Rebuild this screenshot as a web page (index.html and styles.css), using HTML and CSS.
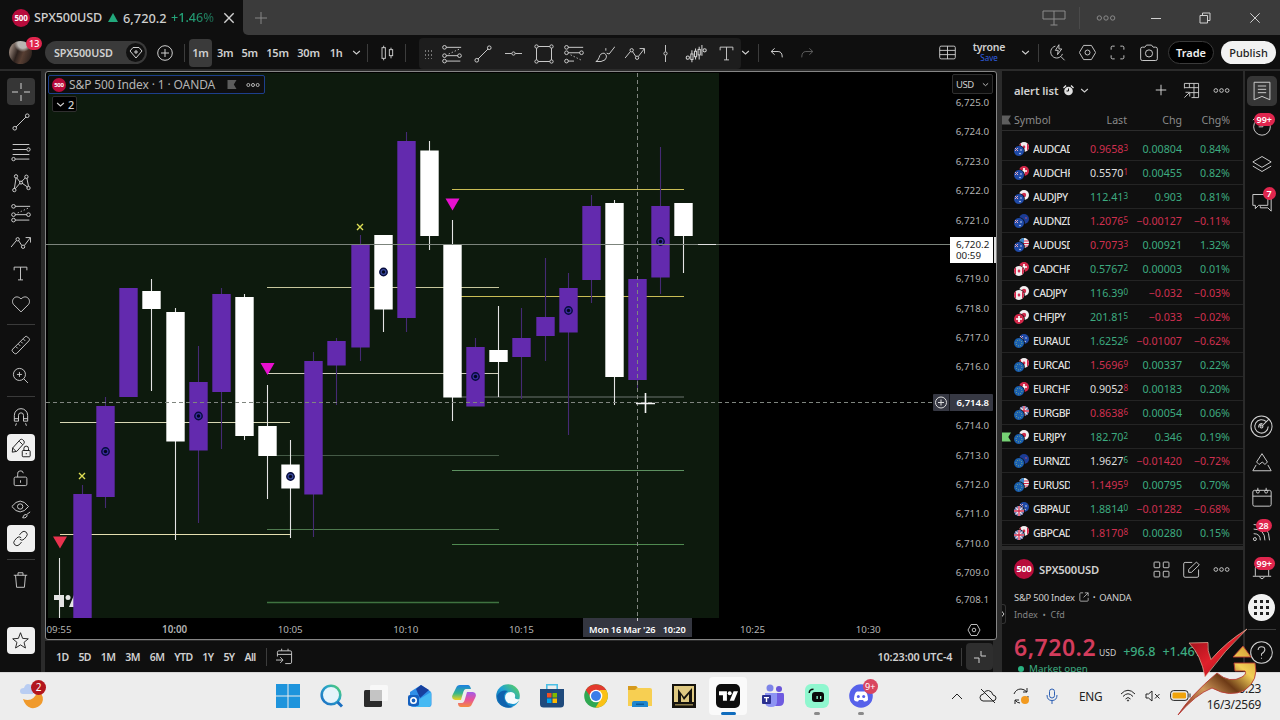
FILE: index.html
```html
<!DOCTYPE html>
<html lang="en">
<head>
  <meta charset="UTF-8" />
  <meta name="viewport" content="width=device-width, initial-scale=1.0" />
  <title>SPX500USD 6,720.2 +1.46%</title>
  <link rel="stylesheet" href="styles.css">
</head>
<body>
  <svg class="sprite">
    <symbol id="i-plus" viewBox="0 0 24 24"><path d="M12 3v18M3 12h18"/></symbol>
    <symbol id="i-close" viewBox="0 0 24 24"><path d="M4 4l16 16M20 4L4 20"/></symbol>
    <symbol id="i-chev" viewBox="0 0 24 24"><path d="M3 8l9 8 9-8"/></symbol>
    <symbol id="i-dots" viewBox="0 0 24 24"><circle cx="4" cy="12" r="2.6"/><circle cx="12" cy="12" r="2.6"/><circle cx="20" cy="12" r="2.6"/></symbol>
    <symbol id="i-trend" viewBox="0 0 24 24"><circle cx="4.500" cy="19.500" r="2.200"/><circle cx="19.500" cy="4.500" r="2.200"/><path d="M6 18L18 6"/></symbol>
    <symbol id="i-fibline" viewBox="0 0 24 24"><path d="M2 3h20M2 9h17M2 15h20M5 20.500h17"/><circle cx="21" cy="9" r="2"/><circle cx="3" cy="20.500" r="2"/></symbol>
    <symbol id="i-pattern" viewBox="0 0 24 24"><path d="M4 19L6 6M7 6l4 5M12 11l5-5M19 6l2 10M5 19l6-7M13 12l7 5"/><circle cx="4" cy="20.500" r="2"/><circle cx="6" cy="4" r="2"/><circle cx="12" cy="11.500" r="1.800"/><circle cx="18.500" cy="4.500" r="2"/><circle cx="21" cy="18" r="2"/></symbol>
    <symbol id="i-proj" viewBox="0 0 24 24"><path d="M5 4h18M5 14h14M5 20.500h17"/><circle cx="3" cy="4" r="2.200"/><circle cx="3" cy="14" r="2.200"/><circle cx="3" cy="20.500" r="2.200"/><circle cx="21" cy="14" r="2.200"/><path stroke-dasharray="1.500 2.500" d="M8 12L21 6"/></symbol>
    <symbol id="i-proj2" viewBox="0 0 24 24"><path d="M5 4h18M5 10.500h14M5 20.500h7"/><circle cx="3" cy="4" r="2.200"/><circle cx="3" cy="10.500" r="2.200"/><circle cx="3" cy="20.500" r="2.200"/><circle cx="21" cy="10.500" r="2.200"/><path stroke-dasharray="1.500 2.500" d="M8 13L22 20"/></symbol>
    <symbol id="i-wave" viewBox="0 0 24 24"><path d="M0 17l6.500-8M9 9l4 6M16 15l7-9M17.500 5.500H23.500v6"/><circle cx="8" cy="7.500" r="2"/><circle cx="14.500" cy="16.500" r="2"/></symbol>
    <symbol id="i-text" viewBox="0 0 24 24"><path d="M3 7.500V3h18v4.500M12 3v18M8.500 21h7"/></symbol>
    <symbol id="i-heart" viewBox="0 0 24 24"><path d="M12 21.500L3 12.500C-1 7 6-.5 12 6c6-6.500 13 1 9 6.500z"/></symbol>
    <symbol id="i-ruler" viewBox="0 0 24 24"><path d="M2 17L17 2q1.500-1 3 .5l1.500 1.500q1.500 1.500 0 3L7 22q-1.500 1-3 0l-2-2q-1.500-1.500 0-3zM6 14l2 2M9 11l2 2M12 8l2 2M15 5l2 2"/></symbol>
    <symbol id="i-zoom" viewBox="0 0 24 24"><circle cx="10.500" cy="10.500" r="8.500"/><path d="M16.500 16.500L22.500 22.500M10.500 7v7M7 10.500h7"/></symbol>
    <symbol id="i-magnet" viewBox="0 0 24 24"><path d="M4 17v-7a8 8 0 0 1 16 0v7h-5v-7a3 3 0 0 0-6 0v7zM4 14h5M15 14h5M6.500 19.500l-1 3M17.500 19.500l1 3"/></symbol>
    <symbol id="i-penlock" viewBox="0 0 24 24"><path d="M2 12L11 2q1.500-1 3 0l1.500 1.500q1 1.500 0 3L7 16l-5.500 1zM10 4l4 4M2 12l4 4"/><rect x="13.500" y="15" width="9.500" height="7.500" rx="1"/><path d="M15.500 15v-2.500a2.700 2.700 0 0 1 5.500 0V15M18.300 18v1.500"/></symbol>
    <symbol id="i-unlock" viewBox="0 0 24 24"><rect x="3" y="10" width="18" height="12" rx="2"/><path d="M8 10V6a4 4 0 0 1 8-1.500M12 14.500v3.500"/></symbol>
    <symbol id="i-eye" viewBox="0 0 24 24"><path d="M1 9q10-13 20 0q-10 13-20 0z"/><circle cx="11" cy="9" r="3.200"/><path d="M14 22.500q1-4 4-4q3 1 0 3.500-2 1-4 .5zM19 18.500l4-3"/></symbol>
    <symbol id="i-link" viewBox="0 0 24 24"><path d="M10.500 7l3.500-4q3-2.500 6 0 3 3 .5 6L17 13q-3 3-6 0M13.500 17L10 21q-3 2.500-6 0-3-3-.5-6L7 11q3-3 6 0"/></symbol>
    <symbol id="i-trash" viewBox="0 0 24 24"><path d="M2.500 6h19M8.500 6V2.500h7V6M5 6l1.500 17h11L19 6"/></symbol>
    <symbol id="i-star" viewBox="0 0 24 24"><path d="M12 1l3 8 8 .6-6 5 2 8L12 18.200 5 22.600l2-8-6-5L9 9z"/></symbol>
    <symbol id="i-hline" viewBox="0 0 24 24"><path d="M0 12h9.500M14.500 12H24"/><circle cx="12" cy="12" r="2.300"/></symbol>
    <symbol id="i-vline" viewBox="0 0 24 24"><path d="M12 0v9.500M12 14.500V24"/><circle cx="12" cy="12" r="2.300"/></symbol>
    <symbol id="i-rect" viewBox="0 0 24 24"><path d="M5 3h14M5 21h14M3 5v14M21 5v14"/><circle cx="3" cy="3" r="2"/><circle cx="21" cy="3" r="2"/><circle cx="3" cy="21" r="2"/><circle cx="21" cy="21" r="2"/></symbol>
    <symbol id="i-brush" viewBox="0 0 24 24"><path d="M1 21q3-1 4-5 1-5 6-5 5 3 1 8-4 3-11 2zM13 8V5M14 11l3 1 7-9"/></symbol>
    <symbol id="i-bars" viewBox="0 0 24 22"><circle cx="3" cy="15" r="1.800"/><circle cx="21.500" cy="7" r="1.800"/><path d="M7.500 7v4M7.500 17v3M11.500 5v3M11.500 14v3M15.500 3v3M15.500 12v5M18.500 1v12"/><rect x="6.300" y="11" width="2.400" height="6"/><rect x="10.300" y="8" width="2.400" height="6"/><rect x="14.300" y="6" width="2.400" height="6"/></symbol>
    <symbol id="i-candles" viewBox="0 0 24 24"><path d="M7 1v3M7 20v3M18 4v3M18 16v4"/><rect x="4.500" y="4" width="5" height="16"/><rect x="15.500" y="7" width="5" height="9"/></symbol>
    <symbol id="i-undo" viewBox="0 0 24 24"><path d="M8 4L2 9.500 8 15M2 9.500h12q7 0 7 10"/></symbol>
    <symbol id="i-redo" viewBox="0 0 24 24"><path d="M16 4l6 5.500L16 15M22 9.500H10q-7 0-7 10"/></symbol>
    <symbol id="i-layout" viewBox="0 0 24 24"><rect x="1" y="3" width="22" height="18" rx="2"/><path d="M1 9h22M1 15h22M12 3v18"/></symbol>
    <symbol id="i-quick" viewBox="0 0 24 24"><path d="M9 3a8.500 8.500 0 1 0 10 11M16.500 17.500L22 23M14 1l-5 8h4l-1 6 6-8h-4z"/></symbol>
    <symbol id="i-hex" viewBox="0 0 24 24"><path d="M6.500 2h11L23.500 12l-6 10h-11L.5 12z"/><circle cx="12" cy="12" r="3.500"/></symbol>
    <symbol id="i-full" viewBox="0 0 24 24"><path d="M3 8V5q0-2 2-2h3M16 3h3q2 0 2 2v3M21 16v3q0 2-2 2h-3M8 21H5q-2 0-2-2v-3"/></symbol>
    <symbol id="i-camera" viewBox="0 0 24 24"><path d="M4 5h3l2-2.500h6L17 5h3q2 0 2 2v12q0 2-2 2H4q-2 0-2-2V7q0-2 2-2z"/><circle cx="12" cy="12.500" r="4.300"/></symbol>
    <symbol id="i-tableadd" viewBox="0 0 24 24"><path d="M2 9V2h20v20H12M2 8h20M9 2v6M15.500 2v20M10 15h12M2 22l7-7M3.500 14.500H9.500v6"/></symbol>
    <symbol id="i-list" viewBox="0 0 24 24"><path d="M2.500 1.500h19v21L12 18.500 2.500 22.500zM7 6h10M7 10h10M7 14h10"/></symbol>
    <symbol id="i-clock" viewBox="0 0 24 24"><circle cx="12" cy="13" r="10"/><path d="M13 7v6H8M1 5l4-4"/></symbol>
    <symbol id="i-layers" viewBox="0 0 24 24"><path d="M12 3l11 6.500L12 16 1 9.500zM1 14.500L12 21l11-6.500"/></symbol>
    <symbol id="i-chat" viewBox="0 0 24 24"><path d="M1 3h18v13H8l-4 4v-4H1zM21 8h2v15l-4-4h-9v-2"/></symbol>
    <symbol id="i-radar" viewBox="0 0 24 24"><circle cx="12" cy="12" r="11"/><path d="M17 7a7 7 0 1 0 2 5M12 12l8-8M9 13q0-4 4-4"/><circle cx="12" cy="12" r="1.500"/></symbol>
    <symbol id="i-mount" viewBox="0 0 24 24"><path d="M12 2l6.500 10-3 3-3-3-4 3-3-3zM5 15.500L1 22.500h22l-4-7"/></symbol>
    <symbol id="i-cal" viewBox="0 0 24 24"><rect x="1" y="4" width="22" height="19" rx="2"/><path d="M1 11h22M7 1v3M17 1v3"/><circle cx="7" cy="5.500" r="1.800"/><circle cx="17" cy="5.500" r="1.800"/></symbol>
    <symbol id="i-feed" viewBox="0 0 24 24"><circle cx="3.500" cy="20.500" r="1.800"/><path d="M2 14q8 0 8 8M2 8.500q13.500 0 13.500 13.500M2 3q19 0 19 19"/></symbol>
    <symbol id="i-bell" viewBox="0 0 24 24"><path d="M1 19.500h22M4 19V10q0-7 8-7t8 7v9M9 20q3 5 6 0"/></symbol>
    <symbol id="i-help" viewBox="0 0 24 24"><circle cx="12" cy="12" r="11.300"/><path d="M8.500 9.500q0-3.500 3.500-3.500t3.500 3q0 2-3.500 4.500v2M12 17.500v1"/></symbol>
    <symbol id="i-goto" viewBox="0 0 24 24"><path d="M2 12V6q0-2 2-2h16q2 0 2 2v14q0 2-2 2h-7M2 9h20M8 1v3M17 1v3M0 17h9M6 13l4 4-4 4"/></symbol>
    <symbol id="i-grid4" viewBox="0 0 24 24"><rect x="1.500" y="1.500" width="8" height="8" rx="1"/><rect x="14.500" y="1.500" width="8" height="8" rx="1"/><rect x="1.500" y="14.500" width="8" height="8" rx="1"/><rect x="14.500" y="14.500" width="8" height="8" rx="1"/></symbol>
    <symbol id="i-edit" viewBox="0 0 24 24"><path d="M13 2H3q-2 0-2 2v17q0 2 2 2h17q2 0 2-2v-9M8 16v-4L19 1.500l4 4L12 16z"/></symbol>
    <symbol id="i-ext" viewBox="0 0 24 24"><path d="M10 2H4q-2 0-2 2v16q0 2 2 2h16q2 0 2-2v-6M14 2h8v8M22 2L11 13"/></symbol>
    <symbol id="i-flag" viewBox="0 0 10 10"><path d="M0 0h10L7 5l3 5H0z"/></symbol>
    <symbol id="i-tv" viewBox="0 0 24 12"><path d="M0 0h10v12H5V5H0z"/><circle cx="13.500" cy="2.500" r="2.500"/><path d="M18.500 0H24l-5 12h-5.500z"/></symbol>
  </svg>

  <header class="titlebar">
    <div class="tab">
      <span class="logo500">500</span>
      <span class="tab-name">SPX500USD</span>
      <span class="up"></span>
      <span class="tab-price">6,720.2</span>
      <span class="tab-chg">+1.46%</span>
      <svg class="ic tab-x"><use href="#i-close"/></svg>
    </div>
    <div class="tabs-rest">
      <svg class="ic s16 dim"><use href="#i-plus"/></svg>
      <div class="window-ctl">
        <svg class="dim" width="24" height="18" viewBox="0 0 24 18"><path d="M1 2h22v8H1zM12 2v14M8.500 16h7"/></svg>
        <i class="sep"></i>
        <svg class="ic s20 dim"><use href="#i-dots"/></svg>
        <svg width="12" height="12" viewBox="0 0 12 12"><path d="M1 6.500h10"/></svg>
        <svg width="12" height="12" viewBox="0 0 12 12"><path d="M1 3.500h7.500V11H1zM3.500 3.500V1H11v7.500H8.500"/></svg>
        <svg class="ic s14"><use href="#i-close"/></svg>
      </div>
    </div>
  </header>

  <nav class="toolbar">
    <div class="avatar"><b class="badge">13</b></div>
    <div class="symbol-pill"><span>SPX500USD</span><i><svg width="14" height="13" viewBox="0 0 14 13"><path d="M4 1.500h6L13 5l-6 7-6-7zM7 4v4M5 6h4"/></svg></i></div>
    <svg class="compare" width="18" height="18" viewBox="0 0 18 18"><circle cx="9" cy="9" r="7.300"/><path d="M9 5v8M5 9h8"/></svg>
    <i class="sep"></i>
    <div class="intervals">
      <span class="on">1m</span><span>3m</span><span>5m</span><span>15m</span><span>30m</span><span>1h</span>
      <svg class="ic s8"><use href="#i-chev"/></svg>
    </div>
    <i class="sep"></i>
    <svg class="ic s16 candles"><use href="#i-candles"/></svg>
    <i class="sep"></i>
    <div class="history">
      <svg class="ic s8"><use href="#i-chev"/></svg>
      <i class="sep"></i>
      <svg class="ic s14"><use href="#i-undo"/></svg>
      <svg class="ic s14 faint"><use href="#i-redo"/></svg>
    </div>
    <div class="layout-tools">
      <svg class="ic s18"><use href="#i-layout"/></svg>
      <div class="layout-name"><b>tyrone</b><a>Save</a></div>
      <svg class="ic s8"><use href="#i-chev"/></svg>
      <i class="sep"></i>
      <div class="layout-icons">
        <svg class="ic s18"><use href="#i-quick"/></svg>
        <svg class="ic s18"><use href="#i-hex"/></svg>
        <svg class="ic s18"><use href="#i-full"/></svg>
        <svg class="ic s20"><use href="#i-camera"/></svg>
      </div>
      <button class="trade">Trade</button>
      <button class="publish">Publish</button>
    </div>
    <div class="favorites">
      <i class="grip"></i>
      <svg class="ic s20"><use href="#i-proj"/></svg>
      <svg class="ic s20"><use href="#i-trend"/></svg>
      <svg class="ic s18"><use href="#i-hline"/></svg>
      <svg class="ic s20"><use href="#i-rect"/></svg>
      <svg class="ic s20"><use href="#i-proj2"/></svg>
      <svg class="ic s20"><use href="#i-brush"/></svg>
      <svg class="ic s20"><use href="#i-wave"/></svg>
      <svg class="ic s18"><use href="#i-vline"/></svg>
      <svg class="ic bars"><use href="#i-bars"/></svg>
      <svg class="ic s18"><use href="#i-text"/></svg>
    </div>
  </nav>

  <main class="workspace">
    <aside class="tools">
      <span class="tool on"><svg width="20" height="20" viewBox="0 0 20 20"><path d="M10 1v6M10 13v6M1 10h6M13 10h6"/></svg></span>
      <span class="tool"><svg class="ic s20"><use href="#i-trend"/></svg></span>
      <span class="tool"><svg class="ic s20"><use href="#i-fibline"/></svg></span>
      <span class="tool"><svg class="ic s20"><use href="#i-pattern"/></svg></span>
      <span class="tool"><svg class="ic s20"><use href="#i-proj"/></svg></span>
      <span class="tool"><svg class="ic s20"><use href="#i-wave"/></svg></span>
      <span class="tool"><svg class="ic s18"><use href="#i-text"/></svg></span>
      <span class="tool"><svg class="ic s20"><use href="#i-heart"/></svg></span>
      <hr>
      <span class="tool"><svg class="ic s20"><use href="#i-ruler"/></svg></span>
      <span class="tool"><svg class="ic s18"><use href="#i-zoom"/></svg></span>
      <hr class="wide">
      <span class="tool"><svg class="ic s20"><use href="#i-magnet"/></svg></span>
      <span class="tool lit"><svg class="ic s20"><use href="#i-penlock"/></svg></span>
      <span class="tool"><svg class="ic s18"><use href="#i-unlock"/></svg></span>
      <span class="tool"><svg class="ic s20"><use href="#i-eye"/></svg></span>
      <span class="tool lit"><svg class="ic s18"><use href="#i-link"/></svg></span>
      <hr>
      <span class="tool"><svg class="ic s18"><use href="#i-trash"/></svg></span>
      <span class="tool lit last"><svg class="ic s18"><use href="#i-star"/></svg></span>
    </aside>

    <section class="center">
      <div class="chart">
        <svg id="plot" viewBox="46 72 950 567" width="950" height="567"></svg>
        <div class="legend">
          <span class="logo500 small">500</span>
          <span>S&amp;P 500 Index · 1 · OANDA</span>
          <svg class="flag" width="10" height="9"><use href="#i-flag"/></svg>
          <svg class="ic s14"><use href="#i-dots"/></svg>
        </div>
        <div class="indicators"><svg class="ic s8"><use href="#i-chev"/></svg>2</div>
        <div class="currency">USD<svg class="ic s6"><use href="#i-chev"/></svg></div>
      </div>
      <div class="ranges">
        <span>1D</span><span>5D</span><span>1M</span><span>3M</span><span>6M</span><span>YTD</span><span>1Y</span><span>5Y</span><span>All</span>
        <i class="sep"></i>
        <svg class="ic s18"><use href="#i-goto"/></svg>
        <span class="clock">10:23:00 UTC-4</span>
        <i class="sep"></i>
        <span class="shrink"><svg width="12" height="12" viewBox="0 0 12 12"><path d="M7 0v5h5M0 7h5v5"/></svg></span>
      </div>
    </section>

    <section class="side">
      <div class="watchlist">
        <div class="wl-head">
          <b>alert list</b>
          <svg class="alarm" width="11" height="11" viewBox="0 0 11 11"><circle cx="5.500" cy="6" r="4.300"/><path d="M.5 3L3 .5M8 .5L10.500 3" class="ears"/><path d="M5.500 3.500V6H3.500"/></svg>
          <svg class="ic s8"><use href="#i-chev"/></svg>
          <svg class="ic s14 add"><use href="#i-plus"/></svg>
          <svg class="ic s18"><use href="#i-tableadd"/></svg>
          <svg class="ic s18"><use href="#i-dots"/></svg>
        </div>
        <div class="wl-cols">
          <svg class="flag" width="9" height="10"><use href="#i-flag"/></svg>
          <span>Symbol</span><span>Last</span><span>Chg</span><span>Chg%</span>
        </div>
        <div id="rows"></div>
      </div>
      <div class="details">
        <div class="d-head">
          <span class="logo500 big">500</span><b>SPX500USD</b>
          <svg class="ic s18"><use href="#i-grid4"/></svg>
          <svg class="ic s18"><use href="#i-edit"/></svg>
          <svg class="ic s18"><use href="#i-dots"/></svg>
        </div>
        <div class="d-name">S&amp;P 500 Index <svg class="ic s12"><use href="#i-ext"/></svg> <i>•</i> OANDA</div>
        <div class="d-kind">Index &nbsp;•&nbsp; Cfd</div>
        <div class="d-price"><b>6,720.2</b><small>USD</small><span>+96.8</span><span>+1.46%</span></div>
        <div class="d-open"><i></i>Market open</div>
        <span class="handle"><svg width="4" height="8" viewBox="0 0 4 8"><path d="M.5 1L3 4 .5 7"/></svg></span>
      </div>
    </section>

    <aside class="rail">
      <span class="r on"><svg class="ic s20"><use href="#i-list"/></svg></span>
      <span class="r"><svg class="ic s20"><use href="#i-clock"/></svg><b class="badge">99+</b></span>
      <span class="r"><svg class="ic s20"><use href="#i-layers"/></svg></span>
      <span class="r"><svg class="ic s20"><use href="#i-chat"/></svg><b class="badge one">7</b></span>
      <span class="r lower"><svg class="ic s24"><use href="#i-radar"/></svg></span>
      <span class="r"><svg class="ic s20"><use href="#i-mount"/></svg></span>
      <span class="r"><svg class="ic s20"><use href="#i-cal"/></svg></span>
      <span class="r"><svg class="ic s20"><use href="#i-feed"/></svg><b class="badge">28</b></span>
      <span class="r bell"><svg class="ic s20"><use href="#i-bell"/></svg><b class="badge">99+</b></span>
      <span class="apps"><i></i><i></i><i></i><i></i><i></i><i></i><i></i><i></i><i></i></span>
      <hr>
      <span class="r"><svg class="ic s24"><use href="#i-help"/></svg></span>
    </aside>
  </main>

  <footer class="taskbar">
    <div class="weather">
      <svg width="28" height="30" viewBox="0 0 28 30"><path d="M3 18q10 4 15-8 7 5 4 12-4 6-11 5-6-2-8-9z" fill="#f09a2c"/><path d="M3 13q-3 0-3-3t4-3q2-6 7-3 2 2 1 4 2 1 1 5z" fill="#b9cdf2"/></svg>
      <b>2</b>
    </div>
    <div class="pinned">
      <span><svg width="24" height="24" viewBox="0 0 24 24"><path fill="#1e94dc" d="M0 0h11.500v11.500H0zM12.500 0H24v11.500H12.500zM0 12.500h11.500V24H0zM12.500 12.500H24V24H12.500z"/></svg></span>
      <span><svg width="24" height="24" viewBox="0 0 24 24"><defs><linearGradient id="srch" x1="0" y1="1" x2="1" y2="0"><stop offset="0" stop-color="#1b6cc4"/><stop offset=".6" stop-color="#2aa5c9"/><stop offset="1" stop-color="#56d364"/></linearGradient></defs><circle cx="11" cy="11" r="9.300" fill="#e6f4fb" class="ring"/><path d="M17.500 18l4.500 4.500" class="grip-line"/></svg></span>
      <span><svg width="26" height="24" viewBox="0 0 26 24"><rect x="1" y="6" width="18" height="17" rx="1.500" fill="#2b2b2b"/><rect x="7" y="1" width="18" height="16" rx="1.500" fill="#fafafa" opacity=".8"/><rect x="7" y="6" width="12" height="11" fill="#c4c4c4"/></svg></span>
      <span><svg width="24" height="24" viewBox="0 0 24 24"><path d="M2 8l11-7 9 6q1.500 1 1.500 3v10q0 3-3 3H5q-3 0-3-3z" fill="#2f8fe8"/><path d="M8 5l5-4 8 5-9 8z" fill="#173f9e"/><path d="M10 16L23 8v12q0 3-3 3H8z" fill="#45b9f3"/><rect x="0" y="11" width="11" height="11" rx="2" fill="#1560be"/><circle cx="5.500" cy="16.500" r="2.700" fill="none" stroke="#fff" stroke-width="1.600"/></svg></span>
      <span><svg width="24" height="24" viewBox="0 0 24 24"><defs><linearGradient id="cpa" x1="0" y1="0" x2="0" y2="1"><stop offset="0" stop-color="#1b7fe3"/><stop offset=".55" stop-color="#36b78a"/><stop offset="1" stop-color="#f2d31c"/></linearGradient><linearGradient id="cpb" x1="0" y1="0" x2="0" y2="1"><stop offset="0" stop-color="#a35be8"/><stop offset=".5" stop-color="#e6529c"/><stop offset="1" stop-color="#f58b3d"/></linearGradient></defs><path d="M8 1h8q2 0 3 4h-5q-2 0-3 4l-2 7H3q-4-1-2.500-5L4 4q1-3 4-3z" fill="url(#cpa)"/><path d="M16 23H9q-3 0-3-4h4q2 0 3-4l2-7h6q4 1 2.500 5L20 20q-1 3-4 3z" fill="url(#cpb)"/></svg></span>
      <span><svg width="24" height="24" viewBox="0 0 24 24"><defs><linearGradient id="edg" x1="0" y1="1" x2="1" y2="0"><stop offset="0" stop-color="#0c59a4"/><stop offset=".5" stop-color="#1ea0d8"/><stop offset="1" stop-color="#62d84e"/></linearGradient></defs><circle cx="12" cy="12" r="11.800" fill="url(#edg)"/><path d="M9 14q0-6 6-6 5 1 4 5-1 3 5 2-3 5-7 5-7 0-8-6z" fill="#f4fbfd"/><path d="M1 12q4-7 11-5-6 3-3 10 2 5 8 6Q4 26 1 12z" fill="#0f62ae"/></svg></span>
      <span><svg width="24" height="24" viewBox="0 0 24 24"><path d="M6 0h12v5h-1.600V1.600H7.600V5H6z" fill="#4bbfe6"/><path d="M0 5h24v15q0 3.500-3.500 3.500h-17Q0 23.500 0 20z" fill="#1f4a7c"/><path d="M7 9h4.500v4.500H7z" fill="#f25022"/><path d="M12.500 9H17v4.500h-4.500z" fill="#7fba00"/><path d="M7 14.500h4.500V19H7z" fill="#00a4ef"/><path d="M12.500 14.500H17V19h-4.500z" fill="#ffb900"/></svg></span>
      <span><svg width="24" height="24" viewBox="0 0 24 24"><circle cx="12" cy="12" r="11.800" fill="#30a852"/><path d="M1.800 6A11.800 11.800 0 0 1 22.200 6L12 7.500l-5 6z" fill="#e33b2e"/><path d="M22.200 6a11.800 11.800 0 0 1-10.700 17.800L17 14.500 15.500 6z" fill="#fbc116"/><circle cx="12" cy="12" r="6.300" fill="#fff"/><circle cx="12" cy="12" r="5" fill="#3b7de9"/></svg></span>
      <span><svg width="26" height="24" viewBox="0 0 26 24"><path d="M1 2h8l2 2h12q2 0 2 2v16H1z" fill="#f7cf52"/><path d="M1 2h8l1.500 1.500L8 6H1z" fill="#d69a1c"/><path d="M5 23v-4q0-2 2-2h12q2 0 2 2v4z" fill="#1e86cf"/><path d="M9 19.500h8v1.500H9z" fill="#0d5a99"/></svg></span>
      <span><svg width="24" height="24" viewBox="0 0 24 24"><path d="M0 0h24v24H0z" fill="#15130d"/><path d="M2 2h20v16H2z" fill="#dfc981"/><path d="M6 18V5l6 8L20 4v14h-3V10l-5 6-3-5v7z" fill="#15130d"/><path d="M3 20h18v1.500H3z" fill="#8a7a48"/></svg></span>
      <span class="active"><i class="tvbox"><svg width="19" height="10"><use href="#i-tv"/></svg></i></span>
      <span><svg width="24" height="24" viewBox="0 0 24 24"><circle cx="9" cy="4" r="3.500" fill="#7d84e8"/><circle cx="18" cy="5" r="3" fill="#6a55d8"/><path d="M13 9h9q1 0 1 2v6q0 5-5 5h-5z" fill="#6f5be0"/><path d="M4 9h12v9q0 5-6 5t-6-5z" fill="#8d93f3"/><rect x="1" y="11" width="9" height="9" rx="1" fill="#2a2f8f"/><path d="M3 13h5v1.300H6.200V18H4.800v-3.700H3z" fill="#fff"/></svg></span>
      <span class="run"><svg width="24" height="24" viewBox="0 0 24 24"><rect width="24" height="24" rx="6" fill="#8ff7cf"/><rect x="7" y="8" width="12" height="10" rx="3" fill="#0a0a0a"/><path d="M3.500 9q0-4.500 5-4.500V6Q5 6 5 9z" fill="#0a0a0a"/><path d="M11.500 12h1.300v3h-1.300zM15 12h1.300v3H15z" fill="#8ff7cf"/></svg></span>
      <span class="run"><svg width="24" height="24" viewBox="0 0 24 24"><circle cx="12" cy="12" r="11.800" fill="#5661ea"/><path d="M5 16Q5 9 8 7.500h8q3 1.500 3 8.500-2 2-4 1.500l-1-1.500h-4l-1 1.500Q7 18 5 16z" fill="#fff"/><circle cx="9.300" cy="12.500" r="1.500" fill="#5661ea"/><circle cx="14.700" cy="12.500" r="1.500" fill="#5661ea"/></svg><b class="badge">9+</b></span>
    </div>
    <div class="tray">
      <svg width="12" height="8" viewBox="0 0 12 8"><path d="M1 7l5-5 5 5"/></svg>
      <svg width="18" height="16" viewBox="0 0 18 16"><path d="M4 13q-3-.5-3-3.500T4.500 6Q6 2 9.500 2.500T14 7q3 .5 3 3t-3 3zM2 1l14 14"/></svg>
      <svg width="18" height="18" viewBox="0 0 18 18"><path d="M2 7q2-5 7-5 3 0 6 3M15 1v4h-4M16 9q0 2-1 3M3 17v-4h4M3 13q2 3 5 3"/><circle cx="13" cy="13" r="4" fill="#f29a1f" stroke="none"/></svg>
      <svg class="mic" width="12" height="16" viewBox="0 0 12 16"><rect x="3.500" y="1" width="5" height="9" rx="2.500"/><path d="M1 7q0 5.500 5 5.500T11 7M6 12.500V16"/></svg>
      <span class="lang">ENG</span>
      <svg width="16" height="13" viewBox="0 0 16 13"><path d="M1 5q7-7.500 14 0M3 7.500q5-5.500 10 0M5.500 10q2.500-3 5 0"/><circle cx="8" cy="11.500" r=".6"/></svg>
      <svg width="16" height="12" viewBox="0 0 16 12"><path d="M1 4h2.500L7 1v10L3.500 8H1zM10 4l4.500 4.500M14.500 4L10 8.500"/></svg>
      <svg width="21" height="11" viewBox="0 0 21 11"><rect x=".6" y=".6" width="17.500" height="9.800" rx="3"/><rect x="2.500" y="2.500" width="13.500" height="6" rx="1.200" fill="#f0a30a" stroke="none"/><path d="M20 3.500v4"/></svg>
      <div class="date"><span>10:23</span><span>16/3/2569</span></div>
    </div>
  </footer>

  <svg class="watermark" width="84" height="90" viewBox="0 0 84 90">
    <defs>
      <linearGradient id="red" x1="0" y1="0" x2="1" y2="1"><stop offset="0" stop-color="#8e0d16"/><stop offset=".5" stop-color="#e0202b"/><stop offset="1" stop-color="#a00d14"/></linearGradient>
      <linearGradient id="gld" x1="0" y1="1" x2="1" y2="0"><stop offset="0" stop-color="#7a1c10"/><stop offset=".35" stop-color="#d0985a"/><stop offset=".55" stop-color="#6d3a16"/><stop offset=".75" stop-color="#f3cf57"/><stop offset="1" stop-color="#c9962c"/></linearGradient>
    </defs>
    <path class="v" d="M13 15l19-.5q-1 8 3 17Q50 14 71 1 49 22 29 49 25 27 13 15z"/>
    <path class="g" d="M67 18L57 29h18zM58 35h21q4 17-10 27-15 8-33-2Q20 66 2 87 14 68 41 45q13 11 25 4 5-3 3-6H59z"/>
  </svg>
  <script src="script.js"></script>
</body>
</html>
```
FILE: styles.css
```css
:root {
  --bg: #0f0f0f;
  --gap: #2b2b2b;
  --line: #2c2c2c;
  --text: #d0d0d0;
  --green: #3dab80;
  --red: #cf304f;
}
* { box-sizing: border-box; }
body {
  margin: 0;
  width: 1280px;
  height: 720px;
  overflow: hidden;
  display: flex;
  flex-direction: column;
  background: var(--gap);
  color: var(--text);
  font: 11px "Trebuchet MS", "Noto Sans", "Open Sans", sans-serif;
}
svg {
  flex: none;
  display: block;
  fill: none;
  stroke: currentColor;
}
.sprite { position: absolute; width: 0; height: 0; }
.ic { width: 20px; height: 20px; stroke-width: 1.15; }
.s6 { width: 7px; height: 7px; stroke-width: 3; }
.s8 { width: 9px; height: 9px; stroke-width: 2.8; }
.s12 { width: 10px; height: 10px; stroke-width: 1.8; }
.s14 { width: 14px; height: 14px; stroke-width: 1.7; }
.s16 { width: 16px; height: 16px; stroke-width: 1.4; }
.s18 { width: 17px; height: 17px; stroke-width: 1.3; }
.s24 { width: 23px; height: 23px; stroke-width: 1.1; }
.dim { color: #8c8c8c; }
.faint { color: #5c5c5c; }
.sep { flex: none; width: 1px; height: 18px; background: #3c3c3c; }
.badge {
  position: absolute;
  padding: 0 3px;
  min-width: 13px;
  height: 13px;
  border-radius: 7px;
  background: #e0264e;
  color: #fff;
  font-size: 9px;
  font-weight: 600;
  line-height: 13px;
  text-align: center;
}
.logo500 {
  flex: none;
  width: 18px;
  height: 18px;
  border-radius: 50%;
  background: #b80c3c;
  color: #fff;
  font: bold 8px/18px "Noto Sans", sans-serif;
  letter-spacing: -.2px;
  text-align: center;
}
.logo500.small { width: 14px; height: 14px; font-size: 6px; line-height: 14px; }
.logo500.big { width: 20px; height: 20px; line-height: 20px; font-size: 9px; }

/* title bar */
.titlebar { display: flex; height: 35px; flex: none; background: var(--bg); }
.tab {
  width: 243px;
  display: flex;
  align-items: center;
  padding-left: 12px;
  font-weight: 500;
}
.tab-name { width: 70px; margin-left: 4px; font-size: 12.6px; letter-spacing: -.1px; }
.up {
  margin: 0 5px 0 4px;
  border: 5px solid transparent;
  border-top: 0;
  border-bottom: 9px solid #22a97c;
}
.tab-price { width: 48px; font-size: 12.8px; }
.tab-chg {
  width: 45px;
  font-size: 12.6px;
  color: transparent;
  background: linear-gradient(90deg, #24a87c 40%, #1b5a46);
  -webkit-background-clip: text;
  background-clip: text;
}
.tab-x { width: 14px; height: 14px; stroke-width: 2.4; margin-left: 6px; }
.tabs-rest {
  flex: 1;
  display: flex;
  align-items: center;
  justify-content: space-between;
  padding: 0 18px 0 10px;
  background: #3b3b3b;
  border-bottom-left-radius: 5px;
}
.window-ctl { display: flex; align-items: center; }
.window-ctl .sep { margin: 0 16px 0 13px; height: 22px; background: #4a4a4a; }
.window-ctl svg + svg { margin-left: 37px; }
.window-ctl .s20 + svg { margin-left: 34px; }

/* top toolbar */
.toolbar {
  position: relative;
  flex: none;
  display: flex;
  align-items: center;
  height: 34px;
  padding: 1px 4px 0 9px;
  margin-bottom: 2px;
  background: var(--bg);
}
.avatar {
  position: relative;
  width: 23px;
  height: 23px;
  border-radius: 50%;
  background: radial-gradient(circle at 60% 10%, #b9b6b2 0 20%, transparent 35%), linear-gradient(110deg, #8b7a70 15%, #2c211d 40%, #583f33 60%, #201a18);
}
.avatar .badge { left: 17px; top: -4px; font-weight: 500; }
.symbol-pill {
  margin-left: 13px;
  width: 102px;
  height: 23px;
  border-radius: 12px;
  display: flex;
  align-items: center;
  justify-content: space-between;
  padding: 0 2px 0 9px;
  background: #3a3a3a;
  font-size: 10.8px;
  font-weight: 600;
  letter-spacing: -.1px;
}
.symbol-pill i {
  width: 19px;
  height: 19px;
  border-radius: 50%;
  display: grid;
  place-items: center;
  background: #111;
}
.compare { margin: 0 10px 0 9px; }
.intervals { display: flex; align-items: center; margin-left: 4px; width: 178px; font-size: 11px; font-weight: 600; letter-spacing: -.2px; }
.intervals span { width: 24.500px; text-align: center; }
.intervals span:nth-child(4), .intervals span:nth-child(5) { width: 31px; }
.intervals .on { width: 23px; line-height: 28px; margin-right: 1px; border-radius: 4px; background: #3a3a3a; }
.intervals svg { margin-left: 3px; }
.candles { margin: 0 10px 0 11px; }
.history { display: flex; align-items: center; margin-left: 335px; }
.history .sep { margin: 0 11px 0 8px; }
.history .s14 + .s14 { margin-left: 16px; }
.layout-tools { display: flex; align-items: center; margin-left: auto; }
.layout-name { width: 50px; margin-left: 8px; text-align: center; line-height: 10px; margin-right: 7px; }
.layout-name b { display: block; font-size: 10.5px; font-weight: 600; letter-spacing: -.2px; }
.layout-name a { color: #2f5fe0; font-size: 8px; }
.layout-tools .sep { margin: 0 10px 0 8px; }
.layout-icons { display: flex; gap: 13px; align-items: center; margin-right: 9px; }
.layout-tools button {
  height: 23px;
  padding: 0;
  border-radius: 12px;
  font: 600 11px "Trebuchet MS", "Noto Sans", sans-serif;
}
.trade { width: 46px; border: 1px solid #3a3a3a; background: #000; color: #f0f0f0; }
.publish { width: 55px; margin-left: 7px; border: 0; background: #f2f2f2; color: #222; }
.layout-tools .publish { font-weight: 500; }
.favorites {
  position: absolute;
  left: 419px;
  top: 3px;
  width: 322px;
  height: 31px;
  border-radius: 4px;
  display: grid;
  grid-template-columns: 18px repeat(10, 30.5px);
  place-items: center;
  background: #1d1d1d;
}
.grip { width: 8px; height: 10px; background: radial-gradient(circle, #777 35%, transparent 40%) 0 0 / 3px 4px; }
.bars { width: 22px; }

/* left drawing tools */
.workspace { flex: none; display: flex; height: 601px; }
.tools {
  width: 41px;
  margin-right: 4px;
  padding-top: 7px;
  display: flex;
  flex-direction: column;
  align-items: center;
  background: var(--bg);
}
.tool {
  flex: none;
  width: 28px;
  height: 27px;
  margin-bottom: 3.4px;
  border-radius: 4px;
  display: grid;
  place-items: center;
}
.tool.on { background: #363636; }
.tool.lit { background: #f0f0f0; color: #1a1a1a; }
.tool.last { margin: auto 0 18px; }
.tools hr, .rail hr { width: 28px; margin: 3px 0 6px; border: 0; border-top: 1px solid #3a3a3a; }
.tools .wide { margin: 4px 0 7px; }

/* chart */
.center { width: 952px; margin-right: 5px; display: flex; flex-direction: column; }
.chart {
  position: relative;
  height: 569px;
  border: 1px solid #858585;
  border-radius: 3px;
  background: #000;
}
#plot text { fill: #b2b2b2; stroke: none; font-size: 9.8px; }
#plot .strong { font-weight: 600; }
#plot .lit { fill: #fff; font-weight: 600; font-size: 9.5px; }
#plot .day { font-size: 9.2px; letter-spacing: -.15px; }
#plot .dark { fill: #222; }
.legend {
  position: absolute;
  left: 2px;
  top: 3px;
  width: 217px;
  height: 19px;
  border: 1px solid #1d3f8c;
  border-radius: 2px;
  display: flex;
  align-items: center;
  padding-left: 3px;
  gap: 3px;
  background: var(--bg);
  color: #b4b4b4;
  font-size: 12px;
  letter-spacing: -.12px;
  white-space: nowrap;
}
.legend .flag { margin: 0 6px 0 auto; }
.legend .ic { margin-right: 4px; }
.flag, .flag use { stroke: none; fill: #5d5d5d; }
.indicators, .currency {
  position: absolute;
  display: flex;
  align-items: center;
  border: 1px solid #2f2f2f;
  border-radius: 2px;
  background: #000;
}
.indicators { left: 6px; top: 24px; width: 25px; height: 16px; gap: 3px; padding-left: 3px; font-weight: 500; }
.currency { right: 3px; top: 2px; width: 41px; height: 20px; justify-content: space-between; padding: 0 3px; background: #0b0b0b; font-size: 9.5px; letter-spacing: -.4px; }
.ranges {
  flex: 1;
  margin: 1px 4px 0 0;
  display: flex;
  align-items: center;
  padding-left: 11px;
  gap: 9.8px;
  background: var(--bg);
  font-size: 10.5px;
  font-weight: 600;
  letter-spacing: -.55px;
}
.clock { margin-left: auto; letter-spacing: -.1px; font-size: 10.8px; }
.ranges .sep + .shrink { margin-left: -6px; }
.ranges .clock + .sep { margin-left: -1px; }
.shrink { width: 27px; height: 27px; border-radius: 4px; display: grid; place-items: center; background: #2e2e2e; }

/* watchlist */
.side { width: 241px; margin-right: 2px; display: flex; flex-direction: column; }
.watchlist { height: 475px; overflow: hidden; background: var(--bg); }
.wl-head { height: 38px; display: flex; align-items: center; padding: 0 13px 0 12px; font-size: 11.3px; letter-spacing: -.1px; }
.wl-head b { font-weight: 600; }
.alarm { margin: 0 6px 0 5px; fill: #e0e0e0; stroke: none; }
.alarm path { stroke: #111; fill: none; }
.alarm .ears { stroke: #e0e0e0; stroke-width: 1.4; }
.add { margin: 0 15px 0 auto; }
.wl-head .s18 + .s18 { margin-left: 13px; }
.wl-cols, .row {
  display: grid;
  grid-template-columns: 12px 56px 1fr 55px 48px;
  align-items: center;
  padding-right: 13px;
  text-align: right;
}
.wl-cols { height: 22px; border-bottom: 1px solid var(--line); color: #8b8b8b; font-size: 10.6px; }
.wl-cols span:nth-of-type(1) { text-align: left; }
#rows { padding-top: 6px; }
.row { height: 24px; border-bottom: 1px solid #242424; font-size: 10.7px; }
.mark, .mark use { fill: #76d275; stroke: none; }
.sym { display: flex; align-items: center; gap: 4px; }
.sym b { width: 37px; overflow: hidden; white-space: nowrap; font-weight: 500; font-size: 10.6px; letter-spacing: -.6px; color: #dedede; text-align: left; }
.sym svg { stroke: none; }
.row sup { font-size: 8px; line-height: 0; vertical-align: 2px; }
.row .last { margin-right: -1px; }
.g { color: var(--green); }
.r-txt { color: var(--red); }
.w { color: #dedede; }

/* symbol details */
.details { position: relative; flex: 1; margin-top: 4px; padding-left: 12px; overflow: hidden; background: var(--bg); }
.d-head { height: 38px; padding-right: 13px; display: flex; align-items: center; }
.d-head b { margin: 0 auto 0 5px; font-size: 11.2px; font-weight: 600; letter-spacing: -.2px; }
.d-head svg { margin-left: 13px; }
.d-name { display: flex; gap: 4px; align-items: center; height: 18px; font-size: 9.4px; color: #cfcfcf; letter-spacing: -.2px; }
.d-name i { font-size: 7px; }
.d-kind { height: 18px; line-height: 18px; font-size: 9px; color: #858585; }
.d-price { display: flex; align-items: baseline; height: 35px; white-space: nowrap; line-height: 47px; }
.d-price b { font-size: 23px; font-weight: 600; letter-spacing: .5px; color: #d33c5c; }
.d-price small { margin: 0 7px 0 3px; font-size: 8.5px; }
.d-price span { margin-right: 7px; font-size: 12.6px; font-weight: 500; color: var(--green); }
.d-open { height: 14px; line-height: 19px; font-size: 9.8px; color: var(--green); }
.d-open i { display: inline-block; width: 6px; height: 6px; margin: 0 5px 0 4px; border-radius: 50%; background: #29b381; }
.handle { position: absolute; left: -1px; top: 54px; width: 5px; height: 20px; border: 1px solid #333; border-left: 0; border-radius: 0 3px 3px 0; display: grid; place-items: center; }

/* right rail */
.rail { width: 35px; padding-right: 2px; display: flex; flex-direction: column; align-items: center; background: var(--bg); }
.r { position: relative; width: 30px; height: 30px; margin-top: 5px; border-radius: 5px; display: grid; place-items: center; flex: none; }
.r + .r { margin-top: 5.300px; }
.r:nth-child(3), .r:nth-child(4) { margin-top: 8px; }
.r.on { background: #363636; }
.r .badge { left: 50%; top: 2px; transform: translateX(-37%); }
.r .badge.one { left: 16px; top: 0; transform: none; }
.r.lower { margin-top: 194px; }
.r.bell { margin-top: 7.500px; }
.apps {
  flex: none;
  width: 27px;
  height: 27px;
  margin: 9px 0 8px;
  padding: 6px;
  border-radius: 50%;
  background: #f2f2f2;
  display: grid;
  grid-template-columns: repeat(3, 3px);
  grid-auto-rows: 3px;
  gap: 3px;
}
.apps i { background: #222; }
.rail hr { margin: 0; }
.rail hr + .r { margin-top: 8px; }

/* windows taskbar */
.taskbar { position: relative; height: 48px; flex: none; display: flex; align-items: center; padding-bottom: 2px; background: #ededed; border-top: 1px solid #d8d8d8; color: #222; }
.taskbar svg { stroke: none; }
.taskbar .ring { stroke: url(#srch); stroke-width: 2.6; }
.taskbar .grip-line { stroke: #1b6fc0; stroke-width: 3; }
.weather { position: relative; width: 248.500px; padding-left: 20px; margin-right: 20px; }
.weather b, .pinned .badge {
  position: absolute;
  left: 31px;
  top: -1px;
  width: 15px;
  height: 15px;
  border-radius: 50%;
  background: #b3161e;
  color: #fff;
  font: 10px/15px "Noto Sans", sans-serif;
  text-align: center;
}
.pinned { display: flex; gap: 6.1px; }
.pinned span { position: relative; width: 38px; height: 38px; display: grid; place-items: center; border-radius: 4px; }
.pinned .active { background: #fafafa; }
.pinned .active::after, .run::after {
  content: "";
  position: absolute;
  bottom: 0;
  width: 15px;
  height: 3px;
  border-radius: 2px;
  background: #0f6cbd;
}
.pinned .run::after { width: 6px; background: #8a8a8a; }
.pinned .badge { left: 21px; top: 2px; padding: 0; background: #d9455f; font-size: 9px; }
.tvbox { width: 24px; height: 24px; border-radius: 5px; display: grid; place-items: center; background: #0d0d0d; }
.tvbox svg { fill: #fff; }
.tray { margin-left: auto; display: flex; align-items: center; padding-right: 19px; }
.tray svg { stroke: currentColor; margin-right: 15px; }
.tray svg:first-child { margin-right: 16px; }
.tray svg:nth-child(3) { margin-right: 16px; }
.tray .mic { color: #2c5fb3; margin-right: 21px; }
.tray .lang { font-size: 11.8px; width: 24px; margin-right: 17px; letter-spacing: -.3px; }
.tray .lang ~ svg { margin-right: 9px; }
.date { display: flex; flex-direction: column; width: 61px; text-align: right; line-height: 16px; font-size: 11.9px; letter-spacing: -.25px; white-space: nowrap; }
.watermark { position: absolute; left: 1176px; top: 628px; stroke: none; }
.watermark .v { fill: url(#red); stroke: #e9b9a0; stroke-width: .7; }
.watermark .g { fill: url(#gld); stroke: #b83a34; stroke-width: .9; }
```
FILE: script.js
```js
const NS = 'http://www.w3.org/2000/svg';
const plot = document.getElementById('plot');

function add(tag, attrs, text) {
  const el = document.createElementNS(NS, tag);
  for (const k in attrs) el.setAttribute(k, attrs[k]);
  if (text) el.textContent = text;
  plot.appendChild(el);
  return el;
}
function hline(x1, x2, y, color, width = 1) {
  add('path', { d: `M${x1} ${y}H${x2}`, stroke: color, 'stroke-width': width });
}

add('rect', { x: 48, y: 73, width: 671, height: 545, fill: '#0d1a0d', stroke: 'none' });
add('path', { d: 'M54 595h10v12h-5v-7h-5zM74 595h5l-5 12h-5z', fill: '#e4e4e4', stroke: 'none' });
add('circle', { cx: 68, cy: 597.5, r: 2.5, fill: '#e4e4e4', stroke: 'none' });

// levels
hline(60, 290, 422.5, '#d8d8b4');
hline(60, 290, 534.5, '#e4dfb0');
hline(267, 499, 287.5, '#c6c69c');
hline(267, 499, 373.5, '#cfcfba');
hline(267, 499, 455.5, '#445a46');
hline(267, 499, 529.5, '#4e7a4e');
hline(267, 499, 602.5, '#3f7340', 1.5);
hline(452, 684, 189.5, '#c9bd55');
hline(452, 684, 296.5, '#c9bd55');
hline(452, 684, 397, '#3c473e', 2);
hline(452, 684, 470.5, '#5d9160');
hline(452, 684, 544.5, '#4f8a50');

// [up, body top, body bottom, high, low, dot]
const candles = [
  [0, 0, 0, 558, 618],
  [1, 494, 618, 485, 618],
  [1, 406, 497, 397, 508, 451.5],
  [1, 288, 397, 288, 397],
  [0, 291, 309, 279, 391],
  [0, 312, 441.5, 308, 540],
  [1, 382, 450.5, 346, 523, 416],
  [1, 294, 392, 288, 449],
  [0, 297, 436, 294, 440],
  [0, 426, 456, 385, 499],
  [0, 464.5, 488.5, 440, 538, 476.5],
  [1, 361, 494.5, 352, 537],
  [1, 341, 365.5, 338, 405],
  [1, 244.5, 347.5, 235, 361],
  [0, 235, 309.5, 235, 332, 272],
  [1, 141, 318, 132, 332],
  [0, 150.5, 236, 141, 250],
  [0, 244, 397.5, 220, 421],
  [1, 347, 406.5, 338, 406, 376.5],
  [0, 350, 362, 306, 397],
  [1, 338, 357, 308, 399],
  [1, 317, 336, 258, 361],
  [1, 288, 332.5, 273, 435, 310.5],
  [1, 206, 280, 195, 303],
  [0, 203, 377, 200, 405],
  [1, 279, 380, 279, 390],
  [1, 206, 277.5, 147, 294, 241.5],
  [0, 203, 236, 203, 273]
];
candles.forEach(([up, top, bottom, high, low, dot], i) => {
  const x = 59.5 + Math.round(i * 23.12);
  add('path', { d: `M${x} ${high}V${low}`, stroke: up ? '#452a74' : '#e4e4e4', 'stroke-width': 1.1 });
  if (bottom) add('rect', { x: x - 9.2, y: top, width: 18.4, height: bottom - top, fill: up ? '#632aae' : '#fff', stroke: 'none' });
  if (dot) {
    add('circle', { cx: x, cy: dot, r: 3.7, fill: up ? '#3a2ba0' : '#39489a', stroke: '#060c3c', 'stroke-width': 1.4 });
    add('circle', { cx: x, cy: dot, r: 1.7, fill: '#03071f', stroke: 'none' });
  }
});

[[60, 536.5, '#e8334e'], [267.5, 363, '#e810d0'], [452.5, 198.5, '#e810d0']].forEach(([x, y, fill]) =>
  add('path', { d: `M${x - 7} ${y}h14l-7 12z`, fill, stroke: 'none' }));
[[82, 476], [360, 227]].forEach(([x, y]) =>
  add('path', { d: `M${x - 3} ${y - 3}l6 6m0-6l-6 6`, stroke: '#dede55', 'stroke-width': 1.4 }));

// price line and crosshair
hline(46, 950, 244.5, '#7c847c');
hline(698, 716, 244.5, '#e0e0e0');
add('path', { d: 'M46 402.5H933', stroke: '#7f857f', 'stroke-dasharray': '4 3' });
add('path', { d: 'M637.5 73V618', stroke: '#7f857f', 'stroke-dasharray': '4 3' });
add('path', { d: 'M636 403.500h19M645.500 393v20', stroke: '#f4f4f4', 'stroke-width': 1.6 });

// price scale
for (let p = 0; p < 17; p++) {
  const price = 6725 - p;
  if (price === 6720 || price === 6715) continue;
  add('text', { x: 989, y: 106 + p * 29.375, 'text-anchor': 'end' }, price.toLocaleString('en-US') + '.0');
}
add('text', { x: 989, y: 603, 'text-anchor': 'end' }, '6,708.1');
add('rect', { x: 950, y: 237, width: 43, height: 26, fill: '#fff', stroke: 'none' });
add('rect', { x: 994, y: 237, width: 2, height: 26, fill: '#ddd', stroke: 'none' });
add('text', { x: 956, y: 247.5, class: 'dark' }, '6,720.2');
add('text', { x: 956, y: 259, class: 'dark' }, '00:59');
add('rect', { x: 933, y: 394, width: 60, height: 17, rx: 1, fill: '#363843', stroke: 'none' });
add('path', { d: 'M949.500 394v17', stroke: '#15161c' });
add('circle', { cx: 941, cy: 402.5, r: 5.5, stroke: '#ddd' });
add('path', { d: 'M938 402.500h6M941 399.500v6', stroke: '#ddd' });
add('text', { x: 989, y: 406, 'text-anchor': 'end', class: 'lit' }, '6,714.8');

// time scale
['09:55', '10:00', '10:05', '10:10', '10:15', '', '10:25', '10:30'].forEach((t, i) => {
  if (t) add('text', { x: 59 + i * 115.6, y: 632.5, 'text-anchor': 'middle', class: i === 1 ? 'strong' : '' }, t);
});
add('rect', { x: 583, y: 618, width: 109, height: 19, fill: '#343640', stroke: 'none' });
add('path', { d: 'M637.500 618v3', stroke: '#ccc' });
add('text', { x: 589, y: 632.5, class: 'lit day' }, "Mon 16 Mar '26");
add('text', { x: 685.5, y: 632.5, 'text-anchor': 'end', class: 'lit day' }, '10:20');
add('path', { d: 'M971 624.500h6l3 5.500-3 5.500h-6l-3-5.500z', stroke: '#bbb' });
add('circle', { cx: 974, cy: 630, r: 1.8, stroke: '#bbb' });

// flags are drawn in a 10x10 circle
const flags = {
  AUD: '<circle cx="5" cy="5" r="5" fill="#1f4aa8"/><path d="M1 2l3 3M1 5l3-3" stroke="#e9a9b8"/><circle cx="7" cy="4" r=".7" fill="#fff"/><circle cx="6" cy="7.500" r=".7" fill="#fff"/>',
  NZD: '<circle cx="5" cy="5" r="5" fill="#1b3c96"/><circle cx="7" cy="4" r=".7" fill="#e5607a"/>',
  CAD: '<circle cx="5" cy="5" r="5" fill="#f3eef0"/><path d="M2 1a5 5 0 0 0 0 8zM8 1a5 5 0 0 1 0 8zM5 3l1.500 2L5 7 3.500 5z" fill="#d2274a"/>',
  CHF: '<circle cx="5" cy="5" r="5" fill="#d4284a"/><path d="M5 2v6M2 5h6" stroke="#fff" stroke-width="1.700"/>',
  JPY: '<circle cx="5" cy="5" r="5" fill="#f3eef0"/><circle cx="5" cy="5" r="2.200" fill="#cf2b4d"/>',
  EUR: '<circle cx="5" cy="5" r="5" fill="#1a5fb0"/><circle cx="5" cy="5" r="2.900" fill="none" stroke="#9fc070" stroke-width=".9" stroke-dasharray=".9 1.370"/>',
  GBP: '<circle cx="5" cy="5" r="5" fill="#34519d"/><path d="M1.500 1.500l7 7M8.500 1.500l-7 7" stroke="#e8d5dd" stroke-width="1.300"/><path d="M5 0v10M0 5h10" stroke="#fff" stroke-width="2.600"/><path d="M5 0v10M0 5h10" stroke="#cf2b4d" stroke-width="1.300"/>',
  USD: '<circle cx="5" cy="5" r="5" fill="#f3eef0"/><path d="M.5 3h9M0 5.500h10M1 8h8" stroke="#d2274a" stroke-width="1.200"/><path d="M5 0v5H0a5 5 0 0 1 5-5z" fill="#3a80c4"/>'
};

// symbol, last, last digit, last colour, digit colour, change, change %
const quotes = [
  ['AUDCAD', '0.9658', 3, 'r-txt', 'r-txt', '0.00804', '0.84%'],
  ['AUDCHF', '0.5570', 1, 'w', 'r-txt', '0.00455', '0.82%'],
  ['AUDJPY', '112.41', 3, 'g', 'g', '0.903', '0.81%'],
  ['AUDNZD', '1.2076', 5, 'r-txt', 'r-txt', '−0.00127', '−0.11%'],
  ['AUDUSD', '0.7073', 3, 'r-txt', 'r-txt', '0.00921', '1.32%'],
  ['CADCHF', '0.5767', 2, 'g', 'g', '0.00003', '0.01%'],
  ['CADJPY', '116.39', 0, 'g', 'g', '−0.032', '−0.03%'],
  ['CHFJPY', '201.81', 5, 'g', 'g', '−0.033', '−0.02%'],
  ['EURAUD', '1.6252', 6, 'g', 'g', '−0.01007', '−0.62%'],
  ['EURCAD', '1.5696', 9, 'r-txt', 'r-txt', '0.00337', '0.22%'],
  ['EURCHF', '0.9052', 8, 'w', 'r-txt', '0.00183', '0.20%'],
  ['EURGBP', '0.8638', 6, 'r-txt', 'r-txt', '0.00054', '0.06%'],
  ['EURJPY', '182.70', 2, 'g', 'g', '0.346', '0.19%'],
  ['EURNZD', '1.9627', 6, 'w', 'g', '−0.01420', '−0.72%'],
  ['EURUSD', '1.1495', 9, 'r-txt', 'r-txt', '0.00795', '0.70%'],
  ['GBPAUD', '1.8814', 0, 'g', 'g', '−0.01282', '−0.68%'],
  ['GBPCAD', '1.8170', 8, 'r-txt', 'r-txt', '0.00280', '0.15%']
];
document.getElementById('rows').innerHTML = quotes.map(([s, last, digit, lc, dc, chg, pct]) => {
  const dir = chg.startsWith('−') ? 'r-txt' : 'g';
  const mark = s === 'EURJPY' ? '<svg class="mark" width="9" height="10"><use href="#i-flag"/></svg>' : '<i></i>';
  return `<div class="row">${mark}
    <div class="sym"><svg width="15" height="16" viewBox="0 0 15 16"><g transform="translate(5 1)">${flags[s.slice(3)]}</g><g transform="translate(0 5)"><circle cx="5" cy="5" r="5.800" fill="#0f0f0f"/>${flags[s.slice(0, 3)]}</g></svg><b>${s}</b></div>
    <span class="last ${lc}">${last}<sup class="${dc}">${digit}</sup></span><span class="${dir}">${chg}</span><span class="${dir}">${pct}</span>
  </div>`;
}).join('');
```
